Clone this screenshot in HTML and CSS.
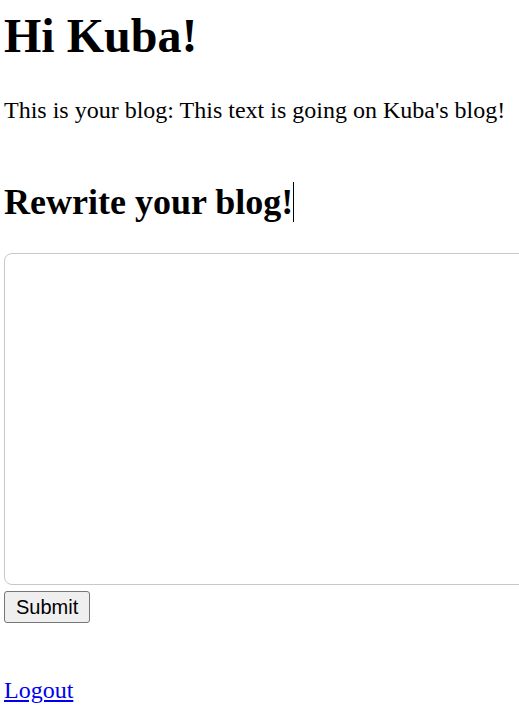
FILE: index.html
```html
<!DOCTYPE html>
<html>
<head>
<meta charset="utf-8">
<link rel="stylesheet" href="styles.css">
</head>
<body>
<h1 class="title">Hi Kuba!</h1>
<p class="blog">This is your blog: This text is going on Kuba's blog!</p>
<h2 class="subtitle">Rewrite your blog!<span class="caret"></span></h2>
<form class="form">
<textarea class="editor"></textarea>
<button type="button" class="submit">Submit</button>
</form>
<a class="logout" href="#">Logout</a>
</body>
</html>
```
FILE: styles.css
```css
html, body { margin: 0; padding: 0; }
body {
  font-family: "Liberation Serif", serif;
  font-size: 24px;
  color: #000;
  background: #fff;
  padding: 0 4px;
  overflow: hidden;
}
.title {
  font-size: 48px;
  font-weight: bold;
  margin: 0;
  padding-top: 8px;
  line-height: 56px;
}
.blog {
  margin: 32px 0 0;
  line-height: 28px;
}
.subtitle {
  font-size: 36px;
  font-weight: bold;
  margin: 57px 0 0;
  line-height: 42px;
}
.caret {
  display: inline-block;
  width: 1px;
  height: 40px;
  background: #000;
  vertical-align: -8px;
}
.form { margin-top: 30px; }
.editor {
  display: block;
  width: 560px;
  height: 332px;
  border: 1px solid #c8c8c8;
  border-radius: 8px;
  margin: 0;
  padding: 0;
  resize: none;
  box-sizing: border-box;
}
.submit {
  display: block;
  margin: 6px 0 0 0;
  font-family: "Liberation Sans", Arial, sans-serif;
  font-size: 20px;
  padding: 2px 11px;
  height: 32px;
  border: 1px solid #767676;
  border-radius: 3px;
  background: #efefef;
  color: #000;
}
.logout {
  display: inline-block;
  margin-top: 54px;
  color: #0000ee;
  text-decoration: underline;
}
```
